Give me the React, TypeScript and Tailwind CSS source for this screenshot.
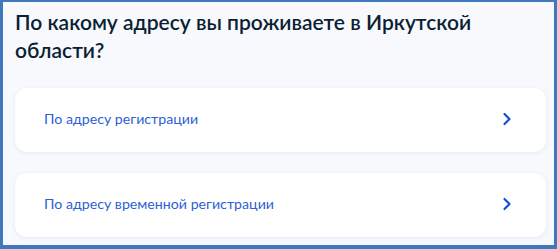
const options = ['По адресу регистрации', 'По адресу временной регистрации'];

const Chevron = () => (
  <svg width="10" height="14" viewBox="0 0 10 14" fill="none" className="shrink-0">
    <path d="M2.5 2l5 5-5 5" stroke="#1450d2" strokeWidth="2.2" strokeLinecap="round" strokeLinejoin="round" />
  </svg>
);

const App = () => {
  return (
    <div className="h-[249px] w-[557px] overflow-hidden border-t-2 border-l-[3px] border-r-[3px] border-b-4 border-[#3f78bd] bg-[#f7f9fd] font-['Lato',sans-serif]">
      <div className="px-3 pt-[6px]">
        <h1 className="text-[21px] font-semibold leading-[28px] text-[#0b1f33]">
          По какому адресу вы проживаете в Иркутской области?
        </h1>
        <div className="mt-[24px] flex flex-col gap-[21px]">
          {options.map((label) => (
            <div
              key={label}
              className="flex h-[64px] w-[531px] items-center justify-between rounded-xl bg-white pl-[29px] pr-[34px] pb-[2px] shadow-[0_1px_4px_rgba(86,112,170,0.12)]"
            >
              <span className="text-[14.2px] text-[#2e5fd3]">{label}</span>
              <Chevron />
            </div>
          ))}
        </div>
      </div>
    </div>
  );
};

export default App;
